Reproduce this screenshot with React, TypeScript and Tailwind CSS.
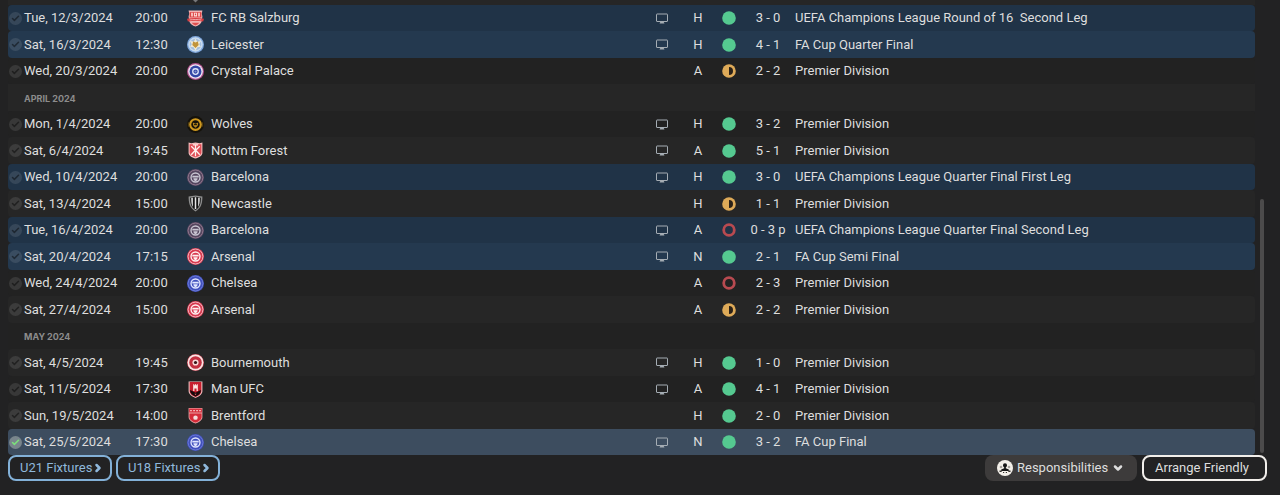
import { useState } from "react";
import { Check, ChevronDown, ChevronRight } from "lucide-react";

type Club =
  | "salzburg"
  | "leicester"
  | "palace"
  | "wolves"
  | "forest"
  | "barcelona"
  | "newcastle"
  | "arsenal"
  | "chelsea"
  | "bournemouth"
  | "manutd"
  | "brentford";

type Result = "win" | "draw" | "loss";

interface Fixture {
  date: string;
  time: string;
  club: Club;
  team: string;
  tv?: boolean;
  venue: "H" | "A" | "N";
  result: Result;
  score: string;
  competition: string;
  cup?: boolean;
}

interface Month {
  month: string;
}

const ROWS: (Fixture | Month)[] = [
  { date: "Tue, 12/3/2024", time: "20:00", club: "salzburg", team: "FC RB Salzburg", tv: true, venue: "H", result: "win", score: "3 - 0", competition: "UEFA Champions League Round of 16  Second Leg", cup: true },
  { date: "Sat, 16/3/2024", time: "12:30", club: "leicester", team: "Leicester", tv: true, venue: "H", result: "win", score: "4 - 1", competition: "FA Cup Quarter Final", cup: true },
  { date: "Wed, 20/3/2024", time: "20:00", club: "palace", team: "Crystal Palace", venue: "A", result: "draw", score: "2 - 2", competition: "Premier Division" },
  { month: "April 2024" },
  { date: "Mon, 1/4/2024", time: "20:00", club: "wolves", team: "Wolves", tv: true, venue: "H", result: "win", score: "3 - 2", competition: "Premier Division" },
  { date: "Sat, 6/4/2024", time: "19:45", club: "forest", team: "Nottm Forest", tv: true, venue: "A", result: "win", score: "5 - 1", competition: "Premier Division" },
  { date: "Wed, 10/4/2024", time: "20:00", club: "barcelona", team: "Barcelona", tv: true, venue: "H", result: "win", score: "3 - 0", competition: "UEFA Champions League Quarter Final First Leg", cup: true },
  { date: "Sat, 13/4/2024", time: "15:00", club: "newcastle", team: "Newcastle", venue: "H", result: "draw", score: "1 - 1", competition: "Premier Division" },
  { date: "Tue, 16/4/2024", time: "20:00", club: "barcelona", team: "Barcelona", tv: true, venue: "A", result: "loss", score: "0 - 3 p", competition: "UEFA Champions League Quarter Final Second Leg", cup: true },
  { date: "Sat, 20/4/2024", time: "17:15", club: "arsenal", team: "Arsenal", tv: true, venue: "N", result: "win", score: "2 - 1", competition: "FA Cup Semi Final", cup: true },
  { date: "Wed, 24/4/2024", time: "20:00", club: "chelsea", team: "Chelsea", venue: "A", result: "loss", score: "2 - 3", competition: "Premier Division" },
  { date: "Sat, 27/4/2024", time: "15:00", club: "arsenal", team: "Arsenal", venue: "A", result: "draw", score: "2 - 2", competition: "Premier Division" },
  { month: "May 2024" },
  { date: "Sat, 4/5/2024", time: "19:45", club: "bournemouth", team: "Bournemouth", tv: true, venue: "H", result: "win", score: "1 - 0", competition: "Premier Division" },
  { date: "Sat, 11/5/2024", time: "17:30", club: "manutd", team: "Man UFC", tv: true, venue: "A", result: "win", score: "4 - 1", competition: "Premier Division" },
  { date: "Sun, 19/5/2024", time: "14:00", club: "brentford", team: "Brentford", venue: "H", result: "win", score: "2 - 0", competition: "Premier Division" },
  { date: "Sat, 25/5/2024", time: "17:30", club: "chelsea", team: "Chelsea", tv: true, venue: "N", result: "win", score: "3 - 2", competition: "FA Cup Final", cup: true },
];

const RING_COLORS: Partial<Record<Club, { base: string; ring: string; core: string }>> = {
  barcelona: { base: "#55465f", ring: "#92798f", core: "#c9c6d2" },
  arsenal: { base: "#d83a50", ring: "#f3b9c0", core: "#fff1f1" },
  chelsea: { base: "#4150bd", ring: "#6c7bd6", core: "#e0e5ff" },
};

const SHIELD = "M2.5 1h11v8.2c0 3-2.6 4.8-5.5 6-2.9-1.2-5.5-3-5.5-6z";

function CrestArt({ club }: { club: Club }) {
  const ring = RING_COLORS[club];
  if (ring) {
    return (
      <>
        <circle cx="8" cy="8" r="8" fill={ring.base} />
        <circle cx="8" cy="8" r="7" fill="none" stroke={ring.ring} strokeWidth="0.9" />
        <circle cx="8" cy="8" r="4.2" fill="none" stroke={ring.core} strokeWidth="1.3" />
        <path d="M5 6.4h6v1.500H5zM6 8.700h4c0 1.500-.9 2.300-2 2.800-1.100-.5-2-1.300-2-2.800z" fill={ring.core} />
      </>
    );
  }
  switch (club) {
    case "salzburg":
      return (
        <>
          <path d="M1.500 0.500h13l-.6 3 .6 2.500-.6 4.500c-.5 2.500-3.200 4-5.900 5-2.700-1-5.400-2.500-5.900-5l-.6-4.500.6-2.500z" fill="#f3b3b3" />
          <path d="M2.500 2h11v5h-11z" fill="#dd4444" />
          <path d="M4 2.500h1.400v3.500H4zM10.600 2.500H12v3.500h-1.400zM6.500 2.500h3v3.500h-3z" fill="#ffe4e0" />
          <path d="M7.400 3.300h1.200v1.700H7.400z" fill="#dd4444" />
          <path d="M0 8.200c5-1 11-1 16 0l-.8 2.600c-4.600-.9-9.800-.9-14.400 0z" fill="#d93c40" />
          <path d="M2.500 9.400c3.700-.6 7.300-.6 11 0" stroke="#f6bcbc" strokeWidth="0.800" fill="none" />
          <path d="M4.500 12h7c-1 1.300-2.200 2-3.500 2.500-1.300-.5-2.500-1.200-3.500-2.500z" fill="#de5050" />
        </>
      );
    case "leicester":
      return (
        <>
          <circle cx="8" cy="8" r="8" fill="#7fa7dc" />
          <circle cx="8" cy="8" r="6.800" fill="#c9dcf0" />
          <circle cx="8" cy="8" r="5.400" fill="#a3bfdf" />
          <path d="M8 2.300l1.500 3 3.500-.5-1.500 3L13 10l-3.200.6L8 13.800l-1.800-3.200L3 10l1.500-2.200-1.500-3 3.500.5z" fill="#f2ead2" />
          <path d="M5.800 5.200l2.200 1 2.200-1 .8 3.300L8 11.400 5 8.500z" fill="#c1943a" />
        </>
      );
    case "palace":
      return (
        <>
          <circle cx="8" cy="8" r="8" fill="#b0508c" />
          <circle cx="8" cy="8" r="6.900" fill="#f3e9f4" />
          <circle cx="8" cy="8" r="5.600" fill="#3347a6" />
          <circle cx="8" cy="8" r="2.600" fill="none" stroke="#dfe5fa" strokeWidth="1.200" />
          <circle cx="8" cy="8" r="1" fill="#8592d1" />
        </>
      );
    case "wolves":
      return (
        <>
          <circle cx="8" cy="8" r="8" fill="#15120b" />
          <circle cx="8" cy="8" r="5" fill="none" stroke="#cf991f" strokeWidth="2" />
          <path d="M1.300 6v4M14.700 6v4" stroke="#755817" strokeWidth="0.700" />
          <path d="M5.400 6.200l2.600 1 2.600-1-.5 3L8 11 5.900 9.200z" fill="#b4851c" />
          <path d="M6.600 8.100h2.800" stroke="#17130a" strokeWidth="0.900" />
        </>
      );
    case "forest":
      return (
        <>
          <path d="M1.500 0.500l2.500.6 4-.6 4 .6 2.500-.6v10c-.5 2.900-3.600 4-6.500 5-2.900-1-6-2.100-6.500-5z" fill="#f7bcbc" />
          <path d="M2.500 2h11v8.400c-.5 2.200-3 3.200-5.500 4-2.500-.8-5-1.800-5.500-4z" fill="#df4d55" />
          <path d="M8 2.500v11M4 4l4 4 4-4M4 12l4-4.500L12 12M5.500 2.800h5" stroke="#fff0ed" strokeWidth="1.200" fill="none" />
        </>
      );
    case "newcastle":
      return (
        <>
          <path d="M1.500 1.500L8 .5l6.500 1c0 6-1 11-6.500 14C2.500 12.500 1.500 7.500 1.500 1.500z" fill="#8d8d8d" />
          <path d="M3 2.600L8 1.600l5 1c0 5.400-.8 9-5 11.500C3.800 11.600 3 8 3 2.600z" fill="#151515" />
          <path d="M4 2.700c0 4.500.3 6.800 1.500 8.600V2.500zM12 2.700c0 4.500-.3 6.800-1.500 8.600V2.500zM7.300 2h1.400v11.200H7.300z" fill="#e6e6e6" />
        </>
      );
    case "bournemouth":
      return (
        <>
          <circle cx="8" cy="8" r="8" fill="#c23a48" />
          <circle cx="8" cy="8" r="7.500" fill="#fae3e3" />
          <circle cx="8" cy="8" r="5.900" fill="#c22f40" />
          <circle cx="8" cy="8" r="2.900" fill="#f8dada" />
          <circle cx="8" cy="8" r="1.500" fill="#351216" />
        </>
      );
    case "manutd":
      return (
        <>
          <path d="M1.500.5h13v9c0 3.200-3.200 5.200-6.500 6.500-3.300-1.300-6.500-3.300-6.500-6.500z" fill="#efc3c3" />
          <path d={SHIELD} fill="#c81f2e" />
          <path d="M3 8.500L8 11l5-2.500v1.200c0 2.200-2.200 3.700-5 4.900-2.800-1.200-5-2.700-5-4.900z" fill="#18090b" />
          <path d="M5.800 3h1v1h.7V3h1v1h.7V3h1v6.500H9V7H7v2.500H5.800z" fill="#fbe6e2" />
          <path d="M7 12h2l-1 1.500z" fill="#eb5a60" />
        </>
      );
    case "brentford":
      return (
        <>
          <path d="M1.500 1h13v8.400c0 3-3.200 4.900-6.500 6.100-3.300-1.200-6.500-3.100-6.500-6.100z" fill="#e8a2a4" />
          <path d="M2 1.500h12v3.700H2z" fill="#d7303d" />
          <path d="M3 3.400h1.500M5.900 3.400h1.500M8.700 3.400h1.500M11.500 3.400H13" stroke="#f7cccc" strokeWidth="1.100" />
          <path d="M2.300 6.200h11.400v3.200c0 2.500-2.800 4.200-5.700 5.300-2.900-1.100-5.700-2.800-5.700-5.300z" fill="#d52b39" />
          <circle cx="8" cy="10" r="2.100" fill="#f5dcdc" />
        </>
      );
    default:
      return null;
  }
}

function Crest({ club }: { club: Club }) {
  return (
    <svg viewBox="0 0 16 16" className="block w-[17px] h-[17px] mx-auto" aria-hidden="true">
      <CrestArt club={club} />
    </svg>
  );
}

function TvIcon() {
  return (
    <svg viewBox="0 0 12 11" className="block w-3 h-[11px] mx-auto" role="img" aria-label="Televised">
      <rect x="0.500" y="1" width="11" height="7.500" rx="0.500" fill="none" stroke="#a5adb4" />
      <path d="M4.500 8.500h3l1 2h-5z" fill="#a5adb4" />
    </svg>
  );
}

function ResultIcon({ result }: { result: Result }) {
  return (
    <svg viewBox="0 0 14 14" className="block w-3.5 h-3.5 mx-auto" role="img" aria-label={result}>
      {result === "win" && <circle cx="7" cy="7" r="6.800" fill="#55c990" />}
      {result === "draw" && (
        <>
          <circle cx="7" cy="7" r="6.800" fill="#deaa58" />
          <path d="M7 3a4 4 0 0 1 0 8z" fill="#2a2118" />
        </>
      )}
      {result === "loss" && <circle cx="7" cy="7" r="5.300" fill="none" stroke="#b84a50" strokeWidth="2.800" />}
    </svg>
  );
}

function rowColor(index: number, cup: boolean, selected: boolean) {
  if (selected) return "bg-[#3d4d5f]";
  if (cup) return index % 2 ? "bg-[#24394f]" : "bg-[#203347]";
  return index % 2 ? "bg-[#262626]" : "bg-[#222222]";
}

export default function App() {
  const [selected, setSelected] = useState(16);

  return (
    <main className="min-h-screen bg-[#222223] text-[#dedede] font-[Roboto,'Liberation_Sans',sans-serif] text-[13px] leading-4 overflow-hidden">
      <div className="flex pl-2">
        <div className="grow min-w-0">
          {/* tail of the row scrolled out above the list */}
          <div className="h-[5px] bg-[#262626] pl-[184px]">
            <svg viewBox="0 0 8 3" className="block w-2 h-[3px]" aria-hidden="true">
              <path d="M1 0h5L3.500 2.500z" fill="#77787a" />
            </svg>
          </div>
          <table className="w-full table-fixed border-collapse text-left">
            <colgroup>
              <col className="w-[112px]" />
              <col className="w-[63px]" />
              <col className="w-6" />
              <col />
              <col className="w-[43px]" />
              <col className="w-[30px]" />
              <col className="w-8" />
              <col className="w-[46px]" />
              <col className="w-[464px]" />
            </colgroup>
            <tbody>
              {ROWS.map((row, index) =>
                "month" in row ? (
                  <tr key={index} className={`h-[26px] even:h-[27px] ${rowColor(index, false, false)}`}>
                    <th colSpan={9} scope="rowgroup" className="p-0 pl-4 pt-0.5 font-[Inter,sans-serif] text-[9px] leading-4 font-bold uppercase text-[#8c8c8c]">
                      {row.month}
                    </th>
                  </tr>
                ) : (
                  <tr key={index} className={`h-[26px] even:h-[27px] ${rowColor(index, !!row.cup, selected === index)}`}>
                    <td className="p-0 rounded-l whitespace-nowrap">
                      <label className="flex items-center gap-0.5 pl-px cursor-pointer">
                        <span className="grid place-items-center w-[13px] h-[13px] shrink-0">
                          <input
                            type="radio"
                            name="fixture"
                            checked={selected === index}
                            onChange={() => setSelected(index)}
                            className="[grid-area:1/1] appearance-none w-[13px] h-[13px] rounded-full bg-white/10 checked:bg-[#79858c]"
                          />
                          <Check
                            className={`[grid-area:1/1] w-[9px] h-[9px] pointer-events-none ${selected === index ? "text-[#7be07b]" : "text-black/45"}`}
                            strokeWidth={4}
                          />
                        </span>
                        {row.date}
                      </label>
                    </td>
                    <td className="p-0 text-center">{row.time}</td>
                    <td className="p-0">
                      <Crest club={row.club} />
                    </td>
                    <td className="p-0 pl-1 truncate">{row.team}</td>
                    <td className="p-0">{row.tv && <TvIcon />}</td>
                    <td className="p-0 text-center">{row.venue}</td>
                    <td className="p-0">
                      <ResultIcon result={row.result} />
                    </td>
                    <td className="p-0 text-center whitespace-nowrap">{row.score}</td>
                    <td className="p-0 pl-1 rounded-r whitespace-pre">{row.competition}</td>
                  </tr>
                ),
              )}
            </tbody>
          </table>
        </div>
        <div className="flex flex-col justify-end w-[25px] shrink-0 pl-[5px] pb-0.5">
          <div className="w-1 h-[56%] rounded-full bg-[#4c4b4b]" />
        </div>
      </div>

      <footer className="flex justify-between pl-2 pr-[13px]">
        <nav className="flex gap-1">
          {["U21 Fixtures", "U18 Fixtures"].map((label) => (
            <button
              key={label}
              className="flex items-center w-[104px] h-[26px] pl-2.5 rounded-lg border-2 border-[#83b1d8] text-[#8fb8dc] whitespace-nowrap cursor-pointer"
            >
              {label}
              <ChevronRight className="w-3 h-3 shrink-0" strokeWidth={5} />
            </button>
          ))}
        </nav>
        <div className="flex gap-[5px]">
          <button className="flex items-center gap-1 w-[152px] h-[26px] pl-3 rounded-lg bg-[#3d3b3b] cursor-pointer">
            <svg viewBox="0 0 16 16" className="w-4 h-4" aria-hidden="true">
              <circle cx="8" cy="8" r="8" fill="#f4f0ea" />
              <path d="M8 3.200a2 2 0 0 1 2 2.100c0 1-.5 1.900-1.200 2.200v.8l3 1.200v1.500H4.200V9.500l3-1.200v-.8C6.500 7.200 6 6.300 6 5.300a2 2 0 0 1 2-2.100z" fill="#171717" />
              <circle cx="4" cy="7" r="1.300" fill="#aaa6a0" />
              <circle cx="12" cy="7" r="1.300" fill="#aaa6a0" />
              <path d="M2.500 10.500h2.200v1.500H2.500zM11.300 10.500h2.200v1.500h-2.200zM6 12h1.200v1H6zM8.800 12H10v1H8.800z" fill="#34322f" />
            </svg>
            Responsibilities
            <ChevronDown className="w-3 h-3" strokeWidth={5} />
          </button>
          <button className="w-[125px] h-[26px] pl-[11px] text-left rounded-lg border-2 border-[#f1eeea] cursor-pointer">Arrange Friendly</button>
        </div>
      </footer>
    </main>
  );
}
